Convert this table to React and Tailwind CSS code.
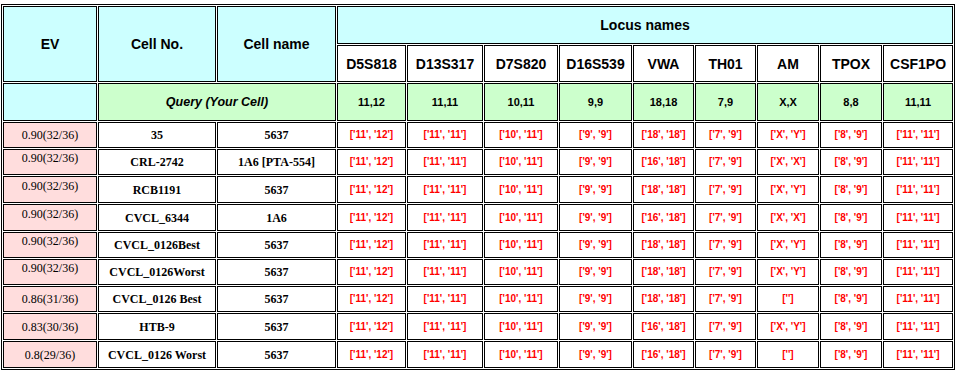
const loci = ['D5S818', 'D13S317', 'D7S820', 'D16S539', 'VWA', 'TH01', 'AM', 'TPOX', 'CSF1PO'];
const query = ['11,12', '11,11', '10,11', '9,9', '18,18', '7,9', 'X,X', '8,8', '11,11'];
const colWidths = ['w-[94px]', 'w-[118px]', 'w-[119px]', 'w-[69px]', 'w-[76px]', 'w-[74px]', 'w-[73px]', 'w-[61px]', 'w-[61px]', 'w-[62px]', 'w-[62px]', 'w-[70px]'];

function alleles(vwa, am) {
  return ["['11', '12']", "['11', '11']", "['10', '11']", "['9', '9']", vwa, "['7', '9']", am, "['8', '9']", "['11', '11']"];
}

const XY = "['X', 'Y']";
const XX = "['X', 'X']";
const EMPTY = "['']";
const V18 = "['18', '18']";
const V16 = "['16', '18']";

const rows = [
  { ev: '0.90(32/36)', no: '35', name: '5637', values: alleles(V18, XY), h: 'h-[26px]' },
  { ev: '0.90(32/36)', no: 'CRL-2742', name: '1A6 [PTA-554]', values: alleles(V16, XX), h: 'h-[26px]', high: true },
  { ev: '0.90(32/36)', no: 'RCB1191', name: '5637', values: alleles(V18, XY), h: 'h-[27px]', high: true },
  { ev: '0.90(32/36)', no: 'CVCL_6344', name: '1A6', values: alleles(V16, XX), h: 'h-[27px]', high: true },
  { ev: '0.90(32/36)', no: 'CVCL_0126Best', name: '5637', values: alleles(V18, XY), h: 'h-[26px]', high: true },
  { ev: '0.90(32/36)', no: 'CVCL_0126Worst', name: '5637', values: alleles(V18, XY), h: 'h-[26px]', high: true },
  { ev: '0.86(31/36)', no: 'CVCL_0126 Best', name: '5637', values: alleles(V18, EMPTY), h: 'h-[26px]' },
  { ev: '0.83(30/36)', no: 'HTB-9', name: '5637', values: alleles(V16, XY), h: 'h-[27px]' },
  { ev: '0.8(29/36)', no: 'CVCL_0126 Worst', name: '5637', values: alleles(V16, EMPTY), h: 'h-[27px]' }
];

const cell = 'border border-black p-0 text-center align-middle leading-[14px]';
const sans = "font-['Liberation_Sans',Arial,sans-serif]";
const serif = "font-['Liberation_Serif','Times_New_Roman',serif]";

export default function App() {
  return (
    <div className="min-h-screen bg-white pl-px pt-1">
      <table className="w-[954px] table-fixed border-separate border-spacing-[1px] border border-black">
        <colgroup>
          {colWidths.map((w, i) => (
            <col key={i} className={w} />
          ))}
        </colgroup>
        <thead>
          <tr className="h-[38px]">
            <th rowSpan={2} className={`${cell} ${sans} bg-[#ccffff] text-[14px] font-bold text-black`}>EV</th>
            <th rowSpan={2} className={`${cell} ${sans} bg-[#ccffff] text-[14px] font-bold text-black`}>Cell No.</th>
            <th rowSpan={2} className={`${cell} ${sans} bg-[#ccffff] text-[14px] font-bold text-black`}>Cell name</th>
            <th colSpan={9} className={`${cell} ${sans} bg-[#ccffff] text-[14px] font-bold text-black`}>Locus names</th>
          </tr>
          <tr className="h-[37px]">
            {loci.map((locus) => (
              <th key={locus} className={`${cell} ${sans} bg-white text-[14px] font-bold text-black`}>{locus}</th>
            ))}
          </tr>
          <tr className="h-[38px]">
            <th className={`${cell} bg-[#ccffff]`}></th>
            <th colSpan={2} className={`${cell} ${sans} bg-[#ccffcc] text-[12.5px] font-bold italic text-black`}>Query (Your Cell)</th>
            {query.map((value, i) => (
              <th key={i} className={`${cell} ${sans} bg-[#ccffcc] text-[11px] font-bold text-black`}>{value}</th>
            ))}
          </tr>
        </thead>
        <tbody>
          {rows.map((row, i) => (
            <tr key={i} className={row.h}>
              <td className={`${cell} ${serif} bg-[#ffdddd] text-[12px] text-black ${row.high ? 'pb-[8px]' : ''}`}>{row.ev}</td>
              <td className={`${cell} ${serif} bg-white text-[12px] font-bold text-black`}>{row.no}</td>
              <td className={`${cell} ${serif} bg-white text-[12px] font-bold text-black`}>{row.name}</td>
              {row.values.map((value, j) => (
                <td key={j} className={`${cell} ${sans} bg-white text-[10px] font-bold text-[#ff0000]`}>{value}</td>
              ))}
            </tr>
          ))}
        </tbody>
      </table>
    </div>
  );
}
